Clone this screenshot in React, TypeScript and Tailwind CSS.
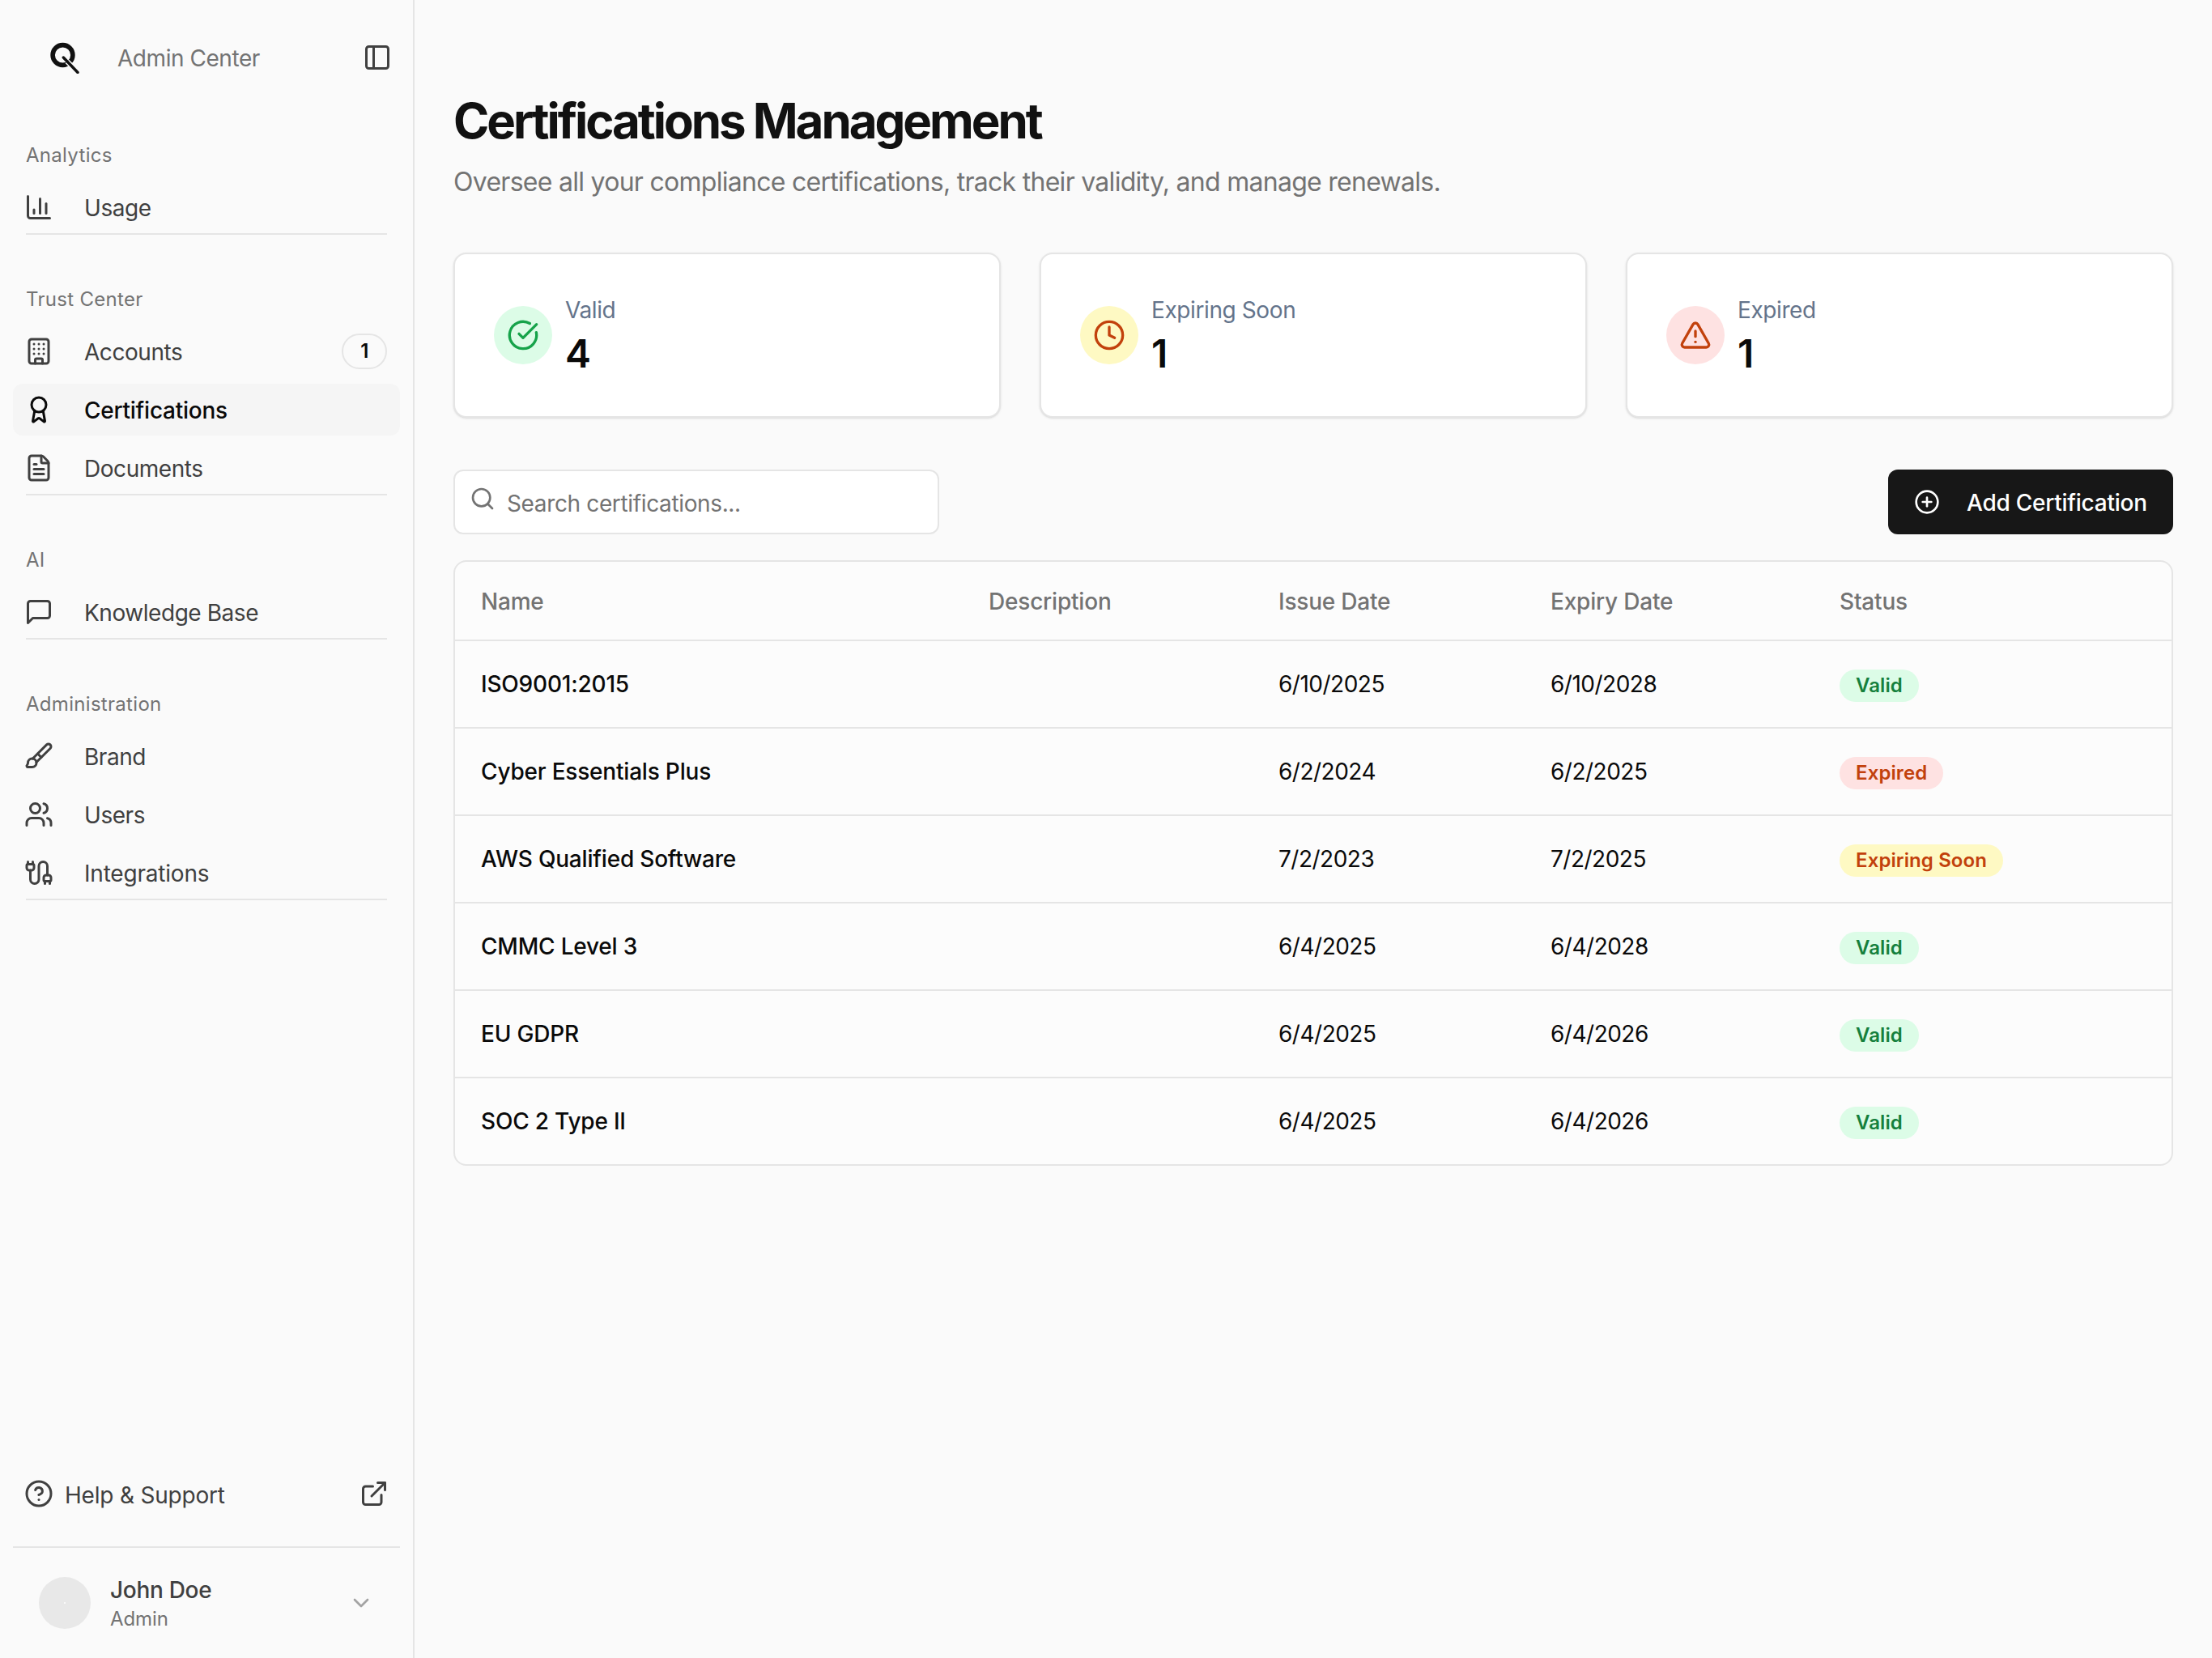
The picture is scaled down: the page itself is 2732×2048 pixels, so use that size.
import React from "react";
import {
  ChartColumn, Building, Award, FileText, Brush, Users, Cable,
  PanelLeft, CircleHelp, ExternalLink, ChevronDown, CircleCheckBig, Clock, TriangleAlert, Search, CirclePlus,
} from "lucide-react";

function BubbleIcon({ size = 36, strokeWidth = 2, className = "" }: { size?: number; strokeWidth?: number; className?: string }) {
  return (
    <svg width={size} height={size} viewBox="0 0 24 24" fill="none" stroke="currentColor" strokeWidth={strokeWidth} strokeLinecap="round" strokeLinejoin="round" className={className} aria-hidden="true">
      <path d="M21 15a2 2 0 0 1-2 2H7l-4 4V5a2 2 0 0 1 2-2h14a2 2 0 0 1 2 2z" />
    </svg>
  );
}

type Item = { label: string; icon: React.ElementType; active?: boolean; badge?: string; track?: string };
const sections: { title: string; items: Item[] }[] = [
  { title: "Analytics", items: [{ label: "Usage", icon: ChartColumn }] },
  {
    title: "Trust Center",
    items: [
      { label: "Accounts", icon: Building, badge: "1" },
      { label: "Certifications", icon: Award, active: true },
      { label: "Documents", icon: FileText },
    ],
  },
  { title: "AI", items: [{ label: "Knowledge Base", icon: BubbleIcon }] },
  {
    title: "Administration",
    items: [
      { label: "Brand", icon: Brush },
      { label: "Users", icon: Users },
      { label: "Integrations", icon: Cable, track: "tracking-[-0.2px]" },
    ],
  },
];

const rows = [
  ["ISO9001:2015", "6/10/2025", "6/10/2028", "Valid"],
  ["Cyber Essentials Plus", "6/2/2024", "6/2/2025", "Expired"],
  ["AWS Qualified Software", "7/2/2023", "7/2/2025", "Expiring Soon"],
  ["CMMC Level 3", "6/4/2025", "6/4/2028", "Valid"],
  ["EU GDPR", "6/4/2025", "6/4/2026", "Valid"],
  ["SOC 2 Type II", "6/4/2025", "6/4/2026", "Valid"],
];

const badgeClass: Record<string, string> = {
  Valid: "bg-[#dcfce7] text-[#15803d]",
  Expired: "bg-[#fee2e2] text-[#c2410c]",
  "Expiring Soon": "bg-[#fef9c3] text-[#c2410c]",
};

const stats = [
  { label: "Valid", value: "4", icon: CircleCheckBig, circle: "bg-[#dcfce7]", color: "text-[#16a34a]" },
  { label: "Expiring Soon", value: "1", icon: Clock, circle: "bg-[#fef9c3]", color: "text-[#c2410c]" },
  { label: "Expired", value: "1", icon: TriangleAlert, circle: "bg-[#fee2e2]", color: "text-[#c2410c]" },
];

const gridCols = "grid grid-cols-[627px_358px_336px_357px_1fr] items-center pl-[32px]";

function Logo() {
  return (
    <svg width="40" height="40" viewBox="0 0 40 40" fill="none" aria-hidden="true">
      <circle cx="17.5" cy="17" r="12.4" stroke="#111111" strokeWidth="5.6" />
      <path d="M23 25L33 35" stroke="#fafafa" strokeWidth="6.5" />
      <path d="M18.3 20L36 38.5" stroke="#111111" strokeWidth="3.4" strokeLinecap="round" />
    </svg>
  );
}

export default function App() {
  return (
    <div className="flex min-h-[2048px] bg-[#fafafa] font-['Inter','Liberation_Sans',sans-serif] text-[28px] leading-[40px] text-[#0a0a0a]">
      <aside className="flex h-[2048px] w-[512px] shrink-0 flex-col border-r-2 border-[#e5e5e5]">
        <div className="flex h-[142px] items-center pl-[60px] pr-[26px]">
          <Logo />
          <span className="ml-[45px] pt-[2px] tracking-[-0.45px] text-[#737373]">Admin Center</span>
          <PanelLeft size={36} strokeWidth={2} className="ml-auto text-[#404040]" />
        </div>
        <nav className="flex flex-col gap-[64px] px-[16px] pt-[34px]">
          {sections.map((s) => (
            <section key={s.title} className="flex flex-col">
              <h3 className="mb-[16px] px-[16px] text-[24px] leading-[32px] font-normal tracking-[0.3px] text-[#737373]">{s.title}</h3>
              <div className="flex flex-col gap-[8px]">
                {s.items.map((it) => {
                  const Icon = it.icon;
                  return (
                    <div
                      key={it.label}
                      className={`flex h-[64px] items-center gap-[38px] rounded-[12px] pl-[14px] pr-[16px] ${it.active ? "bg-[#f5f5f5] font-medium tracking-[-0.25px] text-[#0a0a0a]" : "tracking-[-0.45px] text-[#404040]"}`}
                    >
                      <Icon size={36} strokeWidth={2} className="shrink-0" />
                      <span className={`pt-[2px] ${it.track ?? ""}`}>{it.label}</span>
                      {it.badge && (
                        <span className="ml-auto flex h-[44px] w-[56px] items-center justify-center rounded-full border-2 border-[#e5e5e5] text-[24px] font-semibold text-[#0a0a0a]">
                          {it.badge}
                        </span>
                      )}
                    </div>
                  );
                })}
              </div>
              <div className="mx-[16px] border-b-2 border-[#e5e5e5]" />
            </section>
          ))}
        </nav>
        <div className="mt-auto flex h-[64px] items-center px-[30px] tracking-[-0.2px] text-[#404040]">
          <CircleHelp size={36} strokeWidth={2} />
          <span className="ml-[14px] pt-[3px]">Help &amp; Support</span>
          <ExternalLink size={36} strokeWidth={2} className="ml-auto" />
        </div>
        <div className="mx-[16px] mt-[33px] flex h-[138px] items-center border-t-2 border-[#e5e5e5] px-[32px]">
          <div className="relative h-[64px] w-[64px] shrink-0 rounded-full bg-[#e8e8e8]">
            <span className="absolute left-[31px] top-[31px] h-[2px] w-[2px] rounded-full bg-white" />
          </div>
          <div className="ml-[24px] flex flex-col">
            <span className="font-medium tracking-[-0.3px] text-[#404040]">John Doe</span>
            <span className="text-[24px] leading-[32px] tracking-[-0.1px] text-[#737373]">Admin</span>
          </div>
          <ChevronDown size={32} strokeWidth={2} className="ml-auto text-[#a3a3a3]" />
        </div>
      </aside>

      <main className="flex min-w-0 flex-1 flex-col px-[48px] pt-[113px]">
        <h1 className="text-[60px] leading-[72px] font-bold tracking-[-3.05px] text-[#111111]">Certifications Management</h1>
        <p className="mt-[18px] text-[32px] leading-[44px] tracking-[-0.72px] text-[#737373]">
          Oversee all your compliance certifications, track their validity, and manage renewals.
        </p>

        <div className="mt-[65px] grid grid-cols-3 gap-[48px]">
          {stats.map((c) => {
            const Icon = c.icon;
            return (
              <div key={c.label} className="flex items-center gap-[16px] rounded-[16px] border-2 border-[#e5e5e5] bg-white p-[48px] shadow-sm">
                <div className={`flex h-[72px] w-[72px] shrink-0 items-center justify-center rounded-full ${c.circle}`}>
                  <Icon size={40} strokeWidth={2} className={c.color} />
                </div>
                <div className="flex flex-col">
                  <span className="mt-[1px] -mb-[1px] tracking-[-0.4px] text-[#64748b]">{c.label}</span>
                  <span className="mt-[3px] -mb-[3px] text-[48px] leading-[64px] font-semibold text-[#0a0a0a]">{c.value}</span>
                </div>
              </div>
            );
          })}
        </div>

        <div className="mt-[64px] flex items-center justify-between">
          <div className="relative h-[80px] w-[600px] rounded-[12px] border-2 border-[#e5e5e5] bg-white">
            <Search size={32} strokeWidth={2} className="absolute left-[18px] top-[18px] text-[#737373]" />
            <input
              placeholder="Search certifications..."
              className="h-full w-full bg-transparent pl-[64px] pt-[4px] text-[28px] tracking-[-0.36px] outline-none placeholder:text-[#737373]"
            />
          </div>
          <button className="flex h-[80px] w-[352px] items-center rounded-[12px] bg-[#171717] pl-[32px] font-medium tracking-[-0.25px] text-white">
            <CirclePlus size={32} strokeWidth={2} />
            <span className="ml-[33px] pt-[1px]">Add Certification</span>
          </button>
        </div>

        <div className="mt-[32px] overflow-hidden rounded-[16px] border-2 border-[#e5e5e5] bg-[#fcfcfc]">
          <div className={`${gridCols} h-[98px] border-b-2 border-[#e5e5e5] pt-[2px] font-medium tracking-[-0.2px] text-[#737373]`}>
            <span>Name</span>
            <span>Description</span>
            <span>Issue Date</span>
            <span>Expiry Date</span>
            <span>Status</span>
          </div>
          {rows.map((r, i) => (
            <div key={r[0]} className={`${gridCols} ${i < rows.length - 1 ? "h-[108px] border-b-2 border-[#e5e5e5]" : "h-[106px]"}`}>
              <span className="font-medium tracking-[-0.2px] text-[#0a0a0a]">{r[0]}</span>
              <span />
              <span className="tracking-[-0.5px]">{r[1]}</span>
              <span className="tracking-[-0.5px]">{r[2]}</span>
              <span className="mt-[1px]">
                <span className={`inline-flex h-[40px] items-center rounded-full px-[20px] text-[24px] font-semibold tracking-[0.1px] ${badgeClass[r[3]]}`}>
                  {r[3]}
                </span>
              </span>
            </div>
          ))}
        </div>
      </main>
    </div>
  );
}
